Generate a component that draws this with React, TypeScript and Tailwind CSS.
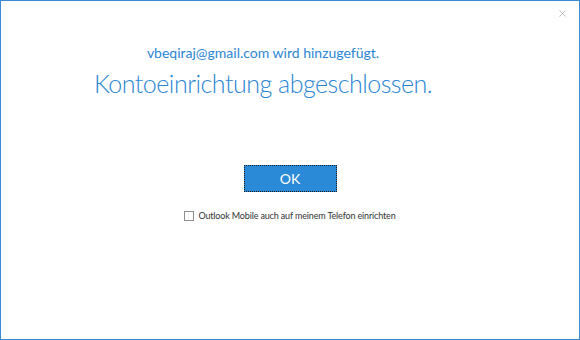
import { X } from "lucide-react";

export default function App() {
  return (
    <div
      className="w-[580px] h-[340px] border border-[#3a8ad6] bg-white flex flex-col"
      style={{ fontFamily: 'Lato, "Open Sans", sans-serif' }}
    >
      {/* Schließen */}
      <div className="flex justify-end pt-[6px] pr-[11px] h-[43px]">
        <button className="w-[12px] h-[12px] flex items-center justify-center text-[#8a8a8a]">
          <X size={11} strokeWidth={1.2} />
        </button>
      </div>

      {/* Texte */}
      <div className="flex flex-col items-center pr-[54px]">
        <p className="text-[14px] leading-[18px] text-[#2b86d4]">
          vbeqiraj@gmail.com wird hinzugefügt.
        </p>
        <h1 className="mt-[4px] text-[25px] leading-[34px] font-light tracking-[-0.5px] text-[#2b86d4]">
          Kontoeinrichtung abgeschlossen.
        </h1>
      </div>

      {/* OK + Checkbox */}
      <div className="flex flex-col items-center mt-[65px]">
        <button className="w-[93px] h-[27px] bg-[#2b8ad8] border border-dotted border-[#1a1a1a] text-white text-[14px] leading-none">
          OK
        </button>
        <label className="mt-[17px] flex items-center gap-[4px] text-[9px] tracking-[-0.15px] text-[#333333]">
          <span className="w-[10px] h-[10px] border border-[#8f8f8f] bg-white" />
          Outlook Mobile auch auf meinem Telefon einrichten
        </label>
      </div>
    </div>
  );
}
